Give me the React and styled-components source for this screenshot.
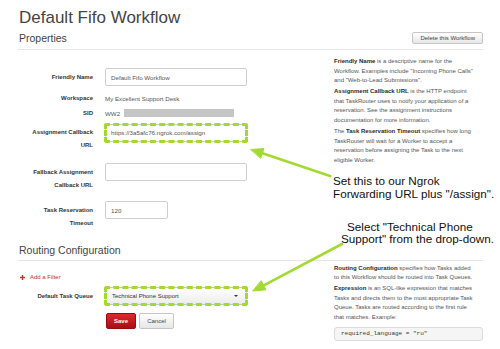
import React from 'react';
import styled, { createGlobalStyle } from 'styled-components';

const LIME = '#a3da32';

const GlobalStyle = createGlobalStyle`
  html, body { margin: 0; padding: 0; background: #fff; }
  body {
    font-family: "Liberation Sans", Arial, Helvetica, sans-serif;
    color: #333;
  }
  * { box-sizing: border-box; }
`;

const Page = styled.div`
  position: relative;
  width: 500px;
  height: 349px;
  overflow: hidden;
  padding: 0 17px 0 18px;
  background: #fff;
`;

const Title = styled.h1`
  margin: 8px 0 0 1px;
  font-size: 17px;
  line-height: 20px;
  font-weight: 400;
  color: #444;
`;

const SectionHeader = styled.div`
  display: flex;
  align-items: center;
  justify-content: space-between;
  margin-top: ${p => p.$mt}px;
  padding-bottom: ${p => p.$pb}px;
  border-bottom: 1px solid #e6e6e6;
`;

const SectionTitle = styled.h2`
  margin: 0 0 0 1px;
  font-size: 10.5px;
  line-height: 12px;
  font-weight: 400;
  color: #444;
`;

const GhostButton = styled.button`
  height: ${p => p.$h}px;
  width: ${p => (p.$w ? `${p.$w}px` : 'auto')};
  padding: 0 7px;
  border: 1px solid #c6c6c6;
  border-radius: 2px;
  background: linear-gradient(#ffffff, #e6e6e6);
  color: #444;
  font-family: inherit;
  font-size: 6px;
  line-height: 1;
`;

const SaveButton = styled.button`
  height: 16px;
  width: 30px;
  padding: 0;
  border: 1px solid #9a0a0e;
  border-radius: 2px;
  background: linear-gradient(#dc2a2e, #a90d12);
  color: #fff;
  font-family: inherit;
  font-weight: 700;
  font-size: 6px;
`;

const Body = styled.div`
  display: grid;
  grid-template-columns: 316px 149px;
`;

const Form = styled.div`
  padding-top: ${p => p.$pt}px;
`;

const Row = styled.div`
  display: flex;
  align-items: flex-start;
  margin-bottom: ${p => p.$mb || 0}px;
`;

const Label = styled.div`
  width: 75px;
  flex: none;
  padding: ${p => p.$pt || 0}px 0 0 7px;
  margin-right: 12px;
  text-align: right;
  font-size: 6px;
  font-weight: 700;
  line-height: 13px;
  color: #333;
`;

const Value = styled.div`
  display: flex;
  align-items: center;
  font-size: 6.2px;
  line-height: 13px;
  color: #555;
`;

const Redacted = styled.span`
  display: inline-block;
  width: 110px;
  height: 8px;
  margin-left: 4px;
  background: #c6c6c6;
`;

const Input = styled.div`
  width: ${p => p.$w}px;
  height: 18px;
  display: flex;
  align-items: center;
  padding: 0 5px;
  border: 1px solid #cfcfcf;
  border-radius: 2px;
  background: #fff;
  font-size: 6.2px;
  color: #555;
  outline: ${p => (p.$hl ? `3px dashed ${LIME}` : 'none')};
  outline-offset: -2px;
`;

const Select = styled.div`
  width: 142px;
  height: 18px;
  display: flex;
  align-items: center;
  justify-content: space-between;
  padding: 0 8px 0 6px;
  border: 1px solid #c8c8c8;
  border-radius: 2px;
  background: linear-gradient(#ffffff, #ececec);
  font-size: 6px;
  color: #333;
  outline: 3px dashed ${LIME};
  outline-offset: -2px;
`;

const Caret = styled.span`
  width: 0;
  height: 0;
  border-left: 2px solid transparent;
  border-right: 2px solid transparent;
  border-top: 2.5px solid #333;
`;

const AddFilter = styled.div`
  display: flex;
  align-items: center;
  gap: 5px;
  margin: 0 0 5px 2px;
  font-size: 6px;
  line-height: 10px;
  color: #c9302c;
`;

const Buttons = styled.div`
  display: flex;
  gap: 3px;
  margin-left: 88px;
`;

const Help = styled.div`
  padding-top: ${p => p.$pt}px;
`;

const HelpText = styled.p`
  margin: 0 0 1.5px;
  font-size: 6px;
  line-height: 9.6px;
  color: #555;
  white-space: nowrap;
  strong { color: #2a2a2a; font-weight: 700; }
`;

const Callout = styled.div`
  font-size: 11.7px;
  line-height: 13px;
  color: #111;
  white-space: nowrap;
`;

const FlowCallout = styled(Callout)`
  margin: 8.5px 0 0 -1px;
`;

const FloatingCallout = styled(Callout)`
  position: absolute;
  left: 341px;
  top: 220.5px;
  line-height: 12.5px;
  span { display: block; }
  span:first-child { padding-left: 6px; }
`;

const CodeBox = styled.pre`
  margin: 4px 0 0;
  height: 14px;
  padding: 0 6px;
  border: 1px solid #dcdcdc;
  border-radius: 3px;
  background: #f5f5f5;
  font-family: "Liberation Mono", "DejaVu Sans Mono", monospace;
  font-size: 6px;
  line-height: 12px;
  color: #333;
`;

const ArrowLayer = styled.svg`
  position: absolute;
  left: 0;
  top: 0;
  pointer-events: none;
`;

const Plus = () => (
  <svg width="5" height="5" viewBox="0 0 5 5">
    <rect x="1.8" y="0" width="1.4" height="5" fill="#c9302c" />
    <rect x="0" y="1.8" width="5" height="1.4" fill="#c9302c" />
  </svg>
);

export default function App() {
  return (
    <>
      <GlobalStyle />
      <Page>
        <Title>Default Fifo Workflow</Title>
        <SectionHeader $mt={4} $pb={5}>
          <SectionTitle>Properties</SectionTitle>
          <GhostButton $h={12}>Delete this Workflow</GhostButton>
        </SectionHeader>

        <Body>
          <Form $pt={18}>
            <Row $mb={5.5}>
              <Label $pt={2.5}>Friendly Name</Label>
              <Input $w={142}>Default Fifo Workflow</Input>
            </Row>
            <Row $mb={2}>
              <Label>Workspace</Label>
              <Value>My Excellent Support Desk</Value>
            </Row>
            <Row $mb={4}>
              <Label>SID</Label>
              <Value>
                WW2
                <Redacted />
              </Value>
            </Row>
            <Row $mb={11}>
              <Label $pt={2.5}>Assignment Callback URL</Label>
              <Input $w={142} $hl>https://3a5afc76.ngrok.com/assign</Input>
            </Row>
            <Row $mb={9.5}>
              <Label $pt={2.5}>Fallback Assignment Callback URL</Label>
              <Input $w={142} />
            </Row>
            <Row>
              <Label $pt={2.5}>Task Reservation Timeout</Label>
              <Input $w={63}>120</Input>
            </Row>
          </Form>

          <Help $pt={7}>
            <HelpText>
              <strong>Friendly Name</strong> is a descriptive name for the
              <br />
              Workflow. Examples include "Incoming Phone Calls"
              <br />
              and "Web-to-Lead Submissions".
            </HelpText>
            <HelpText>
              <strong>Assignment Callback URL</strong> is the HTTP endpoint
              <br />
              that TaskRouter uses to notify your application of a
              <br />
              reservation. See the assignment instructions
              <br />
              documentation for more information.
            </HelpText>
            <HelpText>
              The <strong>Task Reservation Timeout</strong> specifies how long
              <br />
              TaskRouter will wait for a Worker to accept a
              <br />
              reservation before assigning the Task to the next
              <br />
              eligible Worker.
            </HelpText>
            <FlowCallout>
              Set this to our Ngrok
              <br />
              Forwarding URL plus "/assign".
            </FlowCallout>
          </Help>
        </Body>

        <SectionHeader $mt={14.5} $pb={3.5}>
          <SectionTitle>Routing Configuration</SectionTitle>
        </SectionHeader>

        <Body>
          <Form $pt={11.5}>
            <AddFilter>
              <Plus />
              Add a Filter
            </AddFilter>
            <Row $mb={8}>
              <Label $pt={2.5}>Default Task Queue</Label>
              <Select>
                Technical Phone Support
                <Caret />
              </Select>
            </Row>
            <Buttons>
              <SaveButton>Save</SaveButton>
              <GhostButton $h={16} $w={35}>Cancel</GhostButton>
            </Buttons>
          </Form>

          <Help $pt={3}>
            <HelpText>
              <strong>Routing Configuration</strong> specifies how Tasks added
              <br />
              to this Workflow should be routed into Task Queues.
            </HelpText>
            <HelpText>
              <strong>Expression</strong> is an SQL-like expression that matches
              <br />
              Tasks and directs them to the most appropriate Task
              <br />
              Queue. Tasks are routed according to the first rule
              <br />
              that matches. Example:
            </HelpText>
            <CodeBox>required_language = "ru"</CodeBox>
          </Help>
        </Body>

        <FloatingCallout>
          <span>Select "Technical Phone</span>
          <span>Support" from the drop-down.</span>
        </FloatingCallout>

        <ArrowLayer width="500" height="349" viewBox="0 0 500 349">
          <g stroke={LIME} strokeWidth="2.6" strokeLinecap="round" fill={LIME}>
            <line x1="330" y1="176" x2="261" y2="152.8" />
            <polygon points="251,149.5 264,148.6 260.8,158.1" strokeWidth="1" strokeLinejoin="round" />
            <line x1="342" y1="244" x2="262.8" y2="285.8" />
            <polygon points="253,291 265.9,289.8 261.3,281" strokeWidth="1" strokeLinejoin="round" />
          </g>
        </ArrowLayer>
      </Page>
    </>
  );
}
